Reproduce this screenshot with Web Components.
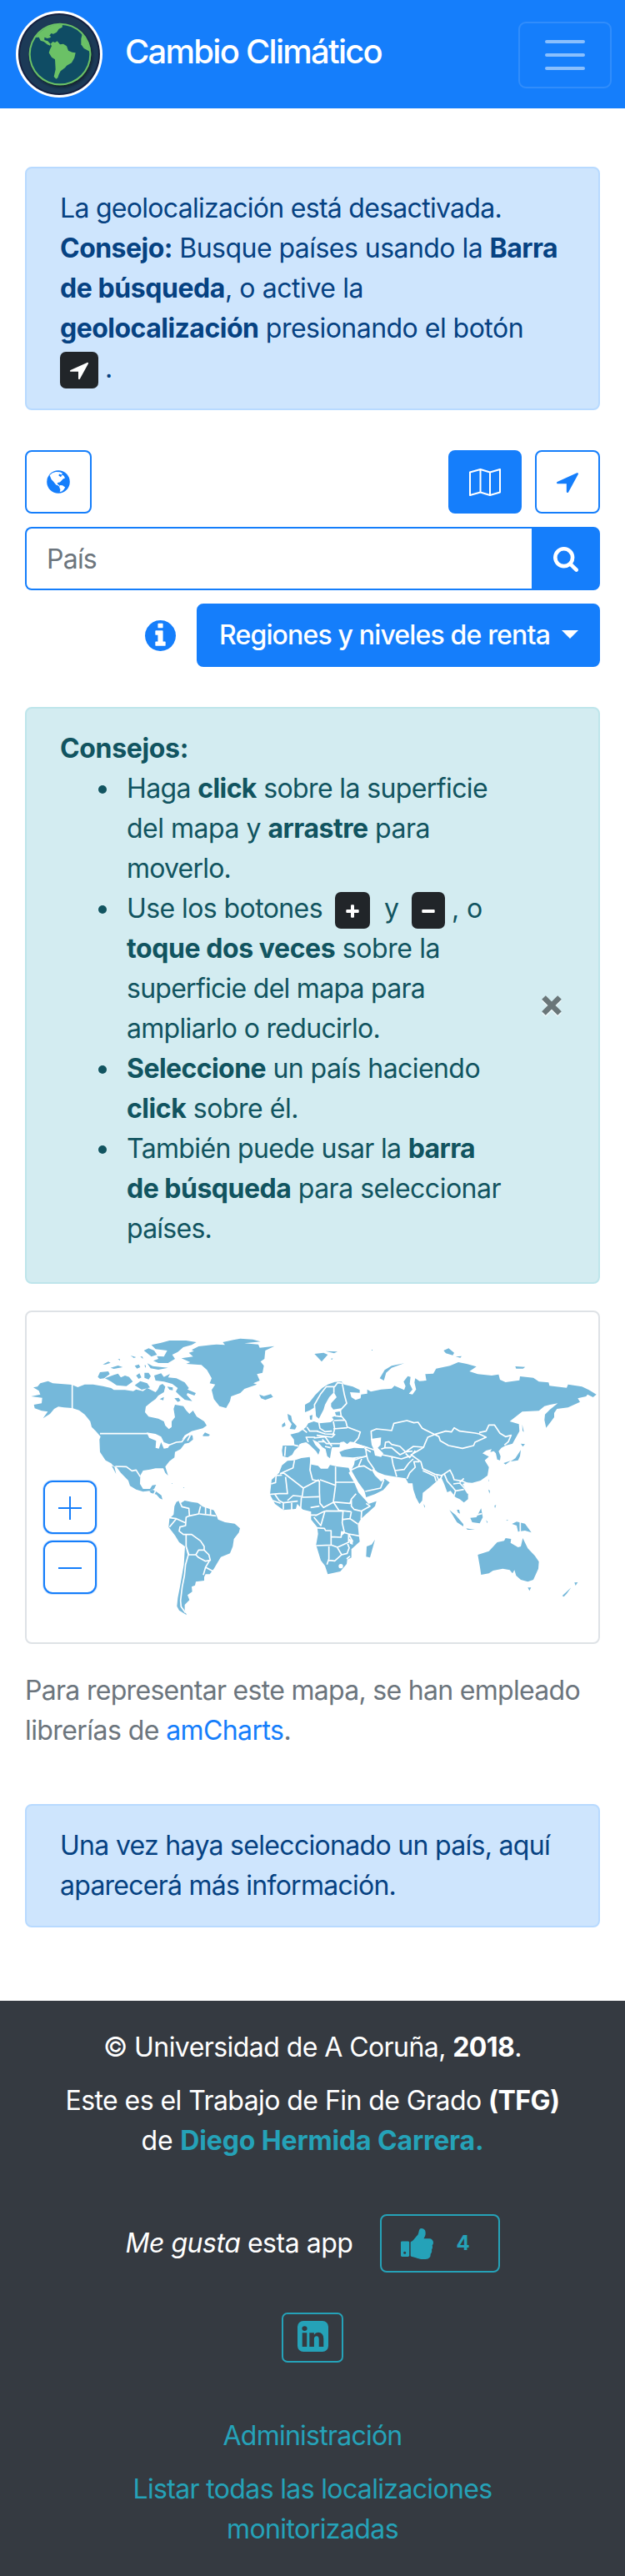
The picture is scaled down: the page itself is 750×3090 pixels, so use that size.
<!DOCTYPE html>
<html lang="es">
<head>
<meta charset="utf-8">
<title>Cambio Climático</title>
<style>
body{margin:0;background:#fff;color:#212529;font:32px/48px Inter,"Noto Sans","Liberation Sans",sans-serif}
b{font-weight:700}
a{color:#157efb;text-decoration:none}
</style>
</head>
<body>
<app-navbar><fit-line w="308">Cambio Climático</fit-line></app-navbar>
<page-main>
  <app-alert style="height:242px;margin-bottom:48px">
    <fit-line w="530">La geolocalización está desactivada.</fit-line>
    <fit-line w="597"><b>Consejo:</b> Busque países usando la <b>Barra</b></fit-line>
    <fit-line w="364"><b>de búsqueda</b>, o active la</fit-line>
    <fit-line w="556"><b>geolocalización</b> presionando el botón</fit-line>
    <text-row><key-badge icon="arrow" style="width:46px"></key-badge><span style="margin-left:8px">.</span></text-row>
  </app-alert>
  <map-toolbar></map-toolbar>
  <country-search></country-search>
  <region-picker><fit-line w="397">Regiones y niveles de renta</fit-line></region-picker>
  <app-alert kind="info" closable style="height:642px;margin-bottom:32px">
    <fit-line w="154"><b>Consejos:</b></fit-line>
    <tip-item>
      <fit-line w="433">Haga <b>click</b> sobre la superficie</fit-line>
      <fit-line w="364">del mapa y <b>arrastre</b> para</fit-line>
      <fit-line w="125">moverlo.</fit-line>
    </tip-item>
    <tip-item>
      <text-row>
        <fit-line w="235">Use los botones</fit-line>
        <key-badge icon="plus" style="width:42px;margin-left:15px"></key-badge>
        <span style="margin-left:17px;width:18px">y</span>
        <key-badge icon="minus" style="width:40px;margin-left:15px"></key-badge>
        <fit-line w="37" style="margin-left:8px">, o</fit-line>
      </text-row>
      <fit-line w="376"><b>toque dos veces</b> sobre la</fit-line>
      <fit-line w="358">superficie del mapa para</fit-line>
      <fit-line w="304">ampliarlo o reducirlo.</fit-line>
    </tip-item>
    <tip-item>
      <fit-line w="424"><b>Seleccione</b> un país haciendo</fit-line>
      <fit-line w="206"><b>click</b> sobre él.</fit-line>
    </tip-item>
    <tip-item>
      <fit-line w="418">También puede usar la <b>barra</b></fit-line>
      <fit-line w="449"><b>de búsqueda</b> para seleccionar</fit-line>
      <fit-line w="102">países.</fit-line>
    </tip-item>
  </app-alert>
  <world-map></world-map>
  <map-credit>
    <fit-line w="666">Para representar este mapa, se han empleado</fit-line>
    <fit-line w="319">librerías de <a>amCharts</a>.</fit-line>
  </map-credit>
  <app-alert style="height:98px">
    <fit-line w="588">Una vez haya seleccionado un país, aquí</fit-line>
    <fit-line w="403">aparecerá más información.</fit-line>
  </app-alert>
</page-main>
<app-footer>
  <fit-line w="502" style="margin-bottom:16px">© Universidad de A Coruña, <b>2018</b>.</fit-line>
  <fit-line w="593">Este es el Trabajo de Fin de Grado <b>(TFG)</b></fit-line>
  <fit-line w="411">de <a><b>Diego Hermida Carrera.</b></a></fit-line>
  <like-row>4</like-row>
  <icon-button></icon-button>
  <fit-line w="215" style="margin-bottom:16px"><a>Administración</a></fit-line>
  <fit-line w="431"><a>Listar todas las localizaciones</a></fit-line>
  <fit-line w="206"><a>monitorizadas</a></fit-line>
</app-footer>

<script>
const ICONS = {
  arrow: ['192 128 1408 1536', '<path d="M1593 349l-640 1280q-17 35-57 35-5 0-15-2-22-5-35.5-22.5t-13.5-39.5v-576h-576q-22 0-39.5-13.5t-22.5-35.5 4-42 29-30l1280-640q13-7 29-7 27 0 45 19 15 14 18.5 34.5t-6.5 39.5z"/>'],
  search: ['64 128 1664 1664', '<path d="M1216 832q0-185-131.5-316.5t-316.5-131.5-316.5 131.5-131.5 316.5 131.5 316.5 316.5 131.5 316.5-131.5 131.5-316.5zm512 832q0 52-38 90t-90 38q-54 0-90-38l-343-342q-179 124-399 124-143 0-273.5-55.5t-225-150-150-225-55.5-273.5 55.5-273.5 150-225 225-150 273.5-55.5 273.5 55.5 225 150 150 225 55.5 273.5q0 220-124 399l343 343q37 37 37 90z"/>'],
  info: ['128 128 1536 1536', '<path d="M1152 1376v-160q0-14-9-23t-23-9h-96v-512q0-14-9-23t-23-9h-320q-14 0-23 9t-9 23v160q0 14 9 23t23 9h96v320h-96q-14 0-23 9t-9 23v160q0 14 9 23t23 9h448q14 0 23-9t9-23zm-128-896v-160q0-14-9-23t-23-9h-192q-14 0-23 9t-9 23v160q0 14 9 23t23 9h192q14 0 23-9t9-23zm640 416q0 209-103 385.5t-279.5 279.5-385.5 103-385.5-103-279.5-279.5-103-385.5 103-385.5 279.5-279.5 385.5-103 385.5 103 279.5 279.5 103 385.5z"/>'],
  linkedin: ['128 128 1536 1536', '<path d="M365 1414h231v-694h-231v694zm246-908q-1-52-36-86t-93-34-94.5 34-36.5 86q0 51 35.5 85.5t92.5 34.5h1q59 0 95-34.5t36-85.5zm585 908h231v-398q0-154-73-233t-193-79q-136 0-209 117h2v-101h-231q3 66 0 694h231v-388q0-38 7-56 15-35 45-59.5t74-24.5q116 0 116 157v371zm468-998v960q0 119-84.5 203.5t-203.5 84.5h-960q-119 0-203.5-84.5t-84.5-203.5v-960q0-119 84.5-203.5t203.5-84.5h960q119 0 203.5 84.5t84.5 203.5z"/>'],
  thumb: ['64 128 1600 1536', '<path d="M320 1344q0-26-19-45t-45-19q-27 0-45.5 19t-18.5 45q0 27 18.5 45.5t45.5 18.5q26 0 45-18.5t19-45.5zm160-512v640q0 26-19 45t-45 19h-288q-26 0-45-19t-19-45v-640q0-26 19-45t45-19h288q26 0 45 19t19 45zm1184 0q0 86-55 149 15 44 15 76 3 76-43 137 17 56 0 117-15 57-54 94 9 112-49 181-64 76-197 78h-129q-66 0-144-15.5t-121.5-29-120.5-39.5q-123-43-158-44-26-1-45-19.5t-19-44.5v-641q0-25 18-43.5t43-20.5q24-2 76-59t101-121q68-87 101-120 18-18 31-48t17.5-48.5 13.5-60.5q7-39 12.5-61t19.5-52 34-50q19-19 45-19 46 0 82.5 10.5t60 26 40 40.5 24 45 12 50 5 45 .5 39q0 38-9.5 76t-19 60-27.5 56q-3 6-10 18t-11 22-8 24h277q78 0 135 57t57 135z"/>'],
  globe: ['0 0 28 28', '<circle cx="14" cy="14" r="13.8"/><path fill="#fff" d="M3.6 6L7 3.2 11 2l5 .3 3 1.5-1.2 1.7L15 4.6l-.6 2 2.6 1.6 1.6-2.6 2.2 1.4L22 9.6l-2.4.8-1.800 2-2 2.200-1.600.200-1.600.600 1 1.800 1.600.800.400 2.200-1.800-1.600-2.600-1L8 13.600 5.600 11zM16 18l3 .3 3.200 2.200-1.600 2.800-2.400 2.200-2.400.600.600-3-1.200-2.400z"/>'],
  map: ['0 0 38 33', '<path fill="none" stroke="currentColor" stroke-width="2" stroke-linejoin="round" d="M1 4.5L13.5 1 25 4.5 37 1v27.5L25 32l-11.500-3.500L1 32zM13.500 1v27.500M25 4.500V32"/>'],
  plus: ['0 0 16 16', '<path d="M6 1.500q0-1.200 1-1.200h2q1 0 1 1.200V6h4.500q1.200 0 1.200 1v2q0 1-1.200 1H10v4.500q0 1.200-1 1.200H7q-1 0-1-1.200V10H1.500Q.3 10 .3 9V7q0-1 1.200-1H6z"/>'],
  minus: ['0 0 16 16', '<rect x=".3" y="6" width="15.400" height="4" rx="1"/>']
};
const icon = (name, w, h, extra = '') =>
  `<svg style="display:block;flex:none;width:${w}px;height:${h}px;${extra}" viewBox="${ICONS[name][0]}" preserveAspectRatio="none" fill="currentColor">${ICONS[name][1]}</svg>`;

const define = (tag, html) => customElements.define(tag, class extends HTMLElement {
  constructor() {
    super();
    this.attachShadow({mode: 'open'}).innerHTML = typeof html === 'function' ? html(this) : html;
  }
});

define('text-row', '<style>:host{display:flex;align-items:center;height:48px;white-space:nowrap}</style><slot></slot>');

define('key-badge', el => `<style>
:host{display:flex;align-items:center;justify-content:center;height:44px;border-radius:7px;background:#212529;color:#fff;flex:none;margin-top:3px}
</style>${el.getAttribute('icon') === 'arrow' ? icon('arrow', 22, 22) : icon(el.getAttribute('icon'), 16, 16, 'margin-top:2px')}`);

define('tip-item', `<style>
:host{display:block;margin-left:80px;position:relative}
i{position:absolute;left:-34px;top:20px;width:10px;height:10px;border-radius:50%;background:currentColor}
</style><i></i><slot></slot>`);

define('app-navbar', `<style>
:host{display:flex;align-items:center;height:130px;background:#157efb;color:#fff;font-weight:500;box-sizing:border-box;padding:0 16px 0 18px}
svg{width:106px;height:106px;flex:none}
.name{margin:-6px 0 0 26px;flex:1;font-size:40px}
.toggle{display:flex;flex-direction:column;align-items:center;justify-content:center;gap:12px;width:108px;height:76px;border:2px solid rgba(255,255,255,.12);border-radius:9px;margin-top:2px}
.toggle i{width:48px;height:4px;border-radius:2px;background:rgba(255,255,255,.5)}
</style>
<svg viewBox="54 36 318 318">
 <defs><filter id="s" x="-20%" y="-20%" width="140%" height="140%"><feDropShadow dx="4" dy="7" stdDeviation="4" flood-color="#0a1420" flood-opacity=".8"/></filter>
 <clipPath id="c"><circle cx="216" cy="195" r="107"/></clipPath></defs>
 <circle cx="213" cy="195" r="156" fill="#fff"/><circle cx="213" cy="195" r="147" fill="#15203f"/><circle cx="213" cy="195" r="141" fill="#1c3a57"/>
 <circle cx="216" cy="195" r="112" fill="#6bc166" filter="url(#s)"/><circle cx="216" cy="195" r="106" fill="#0f4c64"/>
 <g fill="#6bc166" clip-path="url(#c)">
 <path d="M120 135L135 105 180 80 225 85 224 98 212 104 204 116 192 122 184 120 178 128 184 132 180 136 170 138 160 134 160 144 172 148 182 158 180 164 170 160 158 150 146 146 140 134z"/>
 <path d="M182 158L190 150 198 153 206 148 216 160 228 158 240 166 246 182 260 188 272 190 268 208 258 226 240 236 234 244 218 256 212 268 208 280 202 284 194 276 200 250 198 214 186 206 176 190 180 178 186 166z"/>
 <path d="M296 122L292 140 292 160 302 174 324 186 340 160 320 120z"/></g>
</svg>
<div class="name"><slot></slot></div>
<div class="toggle"><i></i><i></i><i></i></div>`);
 
define('page-main', '<style>:host{display:block;box-sizing:border-box;height:2270px;padding:70px 30px 0}</style><slot></slot>');

define('app-alert', el => `<style>
:host{display:flex;align-items:center;border:2px solid #b8daff;border-radius:8px;background:#cee5fd;color:#064282;padding:24px 40px 22px}
:host([kind=info]){background:#d3ecf1;border-color:#bee5eb;color:#115460}
.body{flex:1;align-self:flex-start}
.close{width:26px;height:26px;margin-right:3px;margin-top:22px;filter:drop-shadow(0 2px 0 #fff9)}
</style><div class="body"><slot></slot></div>${el.hasAttribute('closable') ? '<svg class="close" viewBox="0 0 26 26"><path d="M3.500 3.500l19 19m0-19l-19 19" stroke="#6a7679" stroke-width="6.500"/></svg>' : ''}`);

const BTN = '.b{display:flex;align-items:center;justify-content:center;height:76px;box-sizing:border-box;border:2px solid #157efb;border-radius:8px;color:#157efb;background:#fff}.on{background:#157efb;color:#fff}';
define('map-toolbar', `<style>:host{display:flex;gap:16px;margin-bottom:16px}${BTN}</style>
<div class="b" style="width:80px;margin-right:auto">${icon('globe', 28, 28)}</div>
<div class="b on" style="width:88px">${icon('map', 38, 33)}</div>
<div class="b" style="width:78px">${icon('arrow', 26, 26)}</div>`);

define('country-search', `<style>:host{display:flex;margin-bottom:16px}${BTN}
.field{flex:1;justify-content:flex-start;border-radius:8px 0 0 8px;border-right:0;padding-left:24px;color:#6c757d}</style>
<div class="b field"><fit-line w="60" style="margin-top:1px">País</fit-line></div><div class="b on" style="width:82px;border-radius:0 8px 8px 0">${icon('search', 30, 30, 'margin-top:2px')}</div>`);

define('region-picker', `<style>:host{display:flex;justify-content:flex-end;align-items:center;gap:25px;margin-bottom:48px;color:#157efb}${BTN}
.b{width:484px;font-weight:500;padding-left:1px}
.caret{border:10px solid transparent;border-top-color:#fff;border-bottom:0;margin-left:14px;margin-top:-2px}</style>
${icon('info', 37, 37)}
<div class="b on"><slot></slot><i class="caret"></i></div>`);

define('world-map', `<style>
:host{display:block;position:relative;box-sizing:border-box;height:400px;border:2px solid #dee2e6;border-radius:8px}
svg.world{display:block;width:100%;height:100%}
.zoom{position:absolute;left:20px;top:202px;display:flex;flex-direction:column;gap:8px}
.zoom svg{display:block;width:60px;height:60px;border:2px solid #157efb;border-radius:11px;background:#fff;box-shadow:0 0 0 1px #cfe3fb}
.land{fill:#75b8da}.line{fill:none;stroke:#fff;stroke-width:5;stroke-linejoin:round}.sea{fill:#fff}
</style>
<svg class="world" viewBox="32 1574 686 396" preserveAspectRatio="none">
<g transform="translate(30 1570) scale(.33333)">
<path class="land" d="M30 283L45 280 55 268 83 260 100 268 168 273 190 282 215 272 245 272 280 278 310 285 320 292 360 292 390 296 400 290 425 296 440 285 470 300 478 290 485 275 495 270 505 280 500 300 480 312 470 325 455 335 435 352 432 372 445 388 480 395 500 405 505 420 518 433 528 425 528 405 540 390 535 360 540 345 570 350 580 365 592 378 605 366 618 388 645 405 654 420 640 430 600 440 575 455 565 470 590 455 603 455 605 470 590 482 575 485 560 505 540 515 538 535 520 548 505 568 515 600 505 590 498 574 470 574 450 578 425 582 415 600 414 630 425 648 450 648 458 635 472 633 465 648 450 655 425 658 400 650 378 637 372 618 345 590 330 570 318 565 310 556 290 545 270 515 268 470 272 460 255 440 240 425 235 405 215 380 195 365 170 357 140 355 120 352 105 360 90 378 65 394 82 370 60 367 35 358 32 345 60 340 62 320 22 315 55 308 50 295z
M312 565L322 569 328 594zM448 656L460 651 475 659 491 671 495 686 485 682 473 668 453 662z
M262 245L270 228 300 225 305 235 285 250 270 252zM288 250L320 238 335 233 345 247 360 240 375 245 388 262 365 278 330 275 310 262zM280 200L300 190 308 194 290 200zM308 212L335 204 352 210 320 216zM334 181l8 0 0 5zM380 168l20 6-8 3zM395 205l15-5 5 10-12 5zM400 240l12-8 7 15-10 5zM430 230l15 0 8 12-8 12-15-6zM395 275l20-15 25 8 10 15-30 8zM415 172l8 0 2 8zM430 203l5 0 0 10zM640 455l8-10 18 8-5 5-20 0zM528 627l3 0 0 4zM569 642l5 1-2 2z
M455 130L490 122 520 114 580 114 617 120 600 130 570 138 550 155 530 165 540 180 515 195 480 195 462 187 480 180 475 170 500 172 512 150 470 145zM428 150L445 142 465 150 475 165 455 172zM440 196L460 206 515 212 480 219 452 214z
M465 240L490 232 500 245 522 234 515 247 545 250 575 265 590 285 585 290 615 303 610 312 585 303 582 310 602 332 575 327 555 310 543 298 550 285 530 270 500 262 470 258zM538 322l15-2 7 10-10 5zM485 325l15-8-2 12zM512 280l20 3 0 10-12-2z
M563 178L605 172 590 158 608 152 600 148 625 135 690 128 720 130 712 120 750 112 775 107 820 110 848 118 790 124 840 128 845 140 898 134 865 150 862 180 848 190 860 205 855 230 835 235 845 258 822 268 835 272 790 288 775 303 742 315 738 332 724 357 700 350 680 325 672 292 685 272 665 268 672 250 655 220 635 202 580 198 595 192z
M843 308L860 314 885 307 893 317 865 328 850 322z
M545 695L555 690 560 700 575 690 600 695 622 698 640 712 680 725 690 745 695 758 720 768 755 773 774 790 770 805 752 828 748 855 738 880 705 893 695 910 680 935 665 955 650 955 645 965 645 978 615 982 612 995 600 1000 602 1018 585 1030 592 1048 575 1065 575 1085 582 1102 555 1085 547 1070 550 1040 558 1000 565 960 572 920 576 855 555 840 540 815 517 785 520 755 535 740 538 710z"/>
<path class="sea" d="M438 445L470 450 490 460 500 480 522 488 515 500 500 503 490 480 482 503 470 500 472 475 447 464z"/>
<path class="line" d="M170 270V360M270 449H442M505 500L520 490 545 480 565 478 585 452M325 567L365 568 385 583 400 580 415 604M580 855L588 885 578 920 574 960 566 1000 560 1050 562 1072 578 1094M555 690L565 712 590 718 592 745 625 738 632 710M592 745L580 750 578 780 558 785 555 800 570 812 600 812 632 835 645 855 645 868 625 868 615 885 590 885 580 855 580 812M615 885L625 895 650 908 667 905 662 885 645 868M665 905L650 930 642 958M650 930L678 945M522 752L545 755 578 770M545 755L520 785M650 714V742M668 720V742M628 738L688 745M470 655L460 675M595 455L585 475"/>
</g>
<g transform="translate(370 1570) scale(.33333)">
<path class="land" d="M120 262L128 272 160 280 185 292 185 302 150 300 155 318 170 328 188 322 190 308 212 305 212 290 225 298 262 290 300 287 310 277 345 292 350 278 343 262 358 242 368 245 365 270 375 290 362 305 375 308 388 290 382 265 385 250 400 260 425 258 421 235 450 233 460 215 510 205 540 192 570 198 605 208 580 225 610 235 660 240 685 236 690 255 710 264 760 257 762 243 810 248 830 262 865 265 868 277 930 284 935 272 985 280 1010 292 1037 308 1025 318 1005 308 1000 315 970 322 978 335 935 355 895 360 885 375 885 390 870 410 856 428 850 400 852 380 870 362 898 340 870 345 850 350 830 367 770 370 725 405 758 415 760 440 735 485 710 492 695 500 685 512 692 530 690 545 680 542 675 520 668 512 655 515 660 505 640 510 627 520 650 532 635 545 650 570 645 600 620 618 590 626 570 625 555 630 575 665 575 685 560 697 545 685 530 678 512 655 500 660 490 632 478 605 462 620 440 640 412 662 410 690 400 702 388 680 378 650 375 628 360 628 350 610 305 603 275 598 250 588 235 575 228 580 240 600 262 622 275 612 293 625 270 652 240 667 208 678 202 655 180 625 160 590 155 580 165 560 168 540 200 530 160 535 120 532 112 515 130 508 165 500 200 502 205 495 180 487 165 480 150 478 140 487 128 478 115 480 112 498 85 498 82 512 78 538 68 530 62 505 50 497 35 480 15 470 25 490 42 508 36 525 28 512 5 490 -8 480 -25 484 -33 488 -36 497 -50 510 -58 525 -75 535 -92 530 -95 510 -92 492 -50 492 -52 470 -65 452 -35 445 -20 435 -8 425 0 412 20 405 40 412 80 408 92 400 85 390 100 385 96 372 118 368 118 358 90 362 82 352 82 340 102 318 92 300 75 318 60 345 55 362 45 382 38 395 28 387 22 355 5 365 -12 372 -12 345 5 335 25 310 50 285 70 272 95 263z
M22 162L55 158 70 165 48 190zM62 152l43 2-12 6zM80 180l8-2-2 5zM257 250L275 220 300 205 345 196 300 212 280 230 272 258zM487 150L505 142 525 158 520 167 495 160zM530 172l22-2-5 6zM745 207l36 2-8 6-25 0zM770 416l6 27-5-4zM228 147h3v3h-3zM765 485l15 2-8 9zM765 508L762 530 755 545 728 549 745 538zM703 555l25-8-18 13zM648 612l2 8-2 1zM648 650l6 5-2 10zM670 708l6-2-4 12zM415 702l5 8-2 6zM508 724L530 742 558 775 558 783 535 768zM535 723l8 0 3 14-8-4zM568 790l32 5-27 0zM583 752L605 750 622 718 628 750 617 772 590 768zM640 760l6 8-3 2zM712 760l8 0-4 3zM733 774L750 766 780 773 803 805 780 798 755 802 750 780z
M610 885L650 872 680 840 705 835 710 825 730 828 728 842 755 858 765 855 772 825 790 862 815 888 830 910 828 935 810 975 790 982 765 975 748 960 742 940 735 952 725 940 700 935 665 942 650 952 622 957 618 930zM790 1003l12 0-6 12zM958 985l12-1-8 12zM946 1003L930 1025 920 1036 914 1033zM240 830L222 895 208 892 210 855 228 848z"/>
<path class="sea" d="M225 468L262 463 260 490 250 500 270 520 262 533 240 528 235 505 228 490z"/>
<path class="line" d="M228 468L226 440 245 432 275 435 300 438 308 412 355 402 380 410 395 408 410 430 455 452 430 462 420 485 415 498 378 495 350 515 330 495 300 488 290 478 278 480 275 500 262 505M455 452L495 440 515 443 525 428 545 440 600 447 615 450 640 462 600 480 595 492 555 502 505 492 475 475 470 460zM615 445L640 440 650 418 670 418 690 448 710 460 730 455 720 478 706 490M415 498L405 505 370 525 405 550 412 575 455 595 480 600 510 580 520 600 525 615 555 620 572 628M412 582L455 602 460 620M355 612L365 590 385 570 380 550 400 550M350 515L375 512M350 520L365 535 385 510M210 528L215 545 238 578M265 525L300 532 305 560 312 582 318 604M300 532L335 540 365 530M312 582L345 578 362 555 378 540M275 500L300 500 330 525 350 515M206 500L210 530 190 535 165 545M180 568L200 565 228 582M150 582L180 568 192 540M205 657L260 645 272 615M490 595L500 620 518 640 530 655 525 672M522 630L545 627 562 645 575 665M530 655L560 650M545 625L560 610M462 600L472 622 482 598M25 387L22 345 45 305 65 280 95 280 105 266 125 268M92 302L92 280M122 268L130 310 138 340 115 365 118 385 135 405 140 425 187 443 180 465 165 482M90 432L140 428M92 402L130 400M96 385L120 388M90 405L95 432 88 455M38 410L42 430 60 442 85 440M-5 425L5 440 35 440M0 480L-8 462 25 462M-5 445L-20 433M30 440L60 450 95 452 85 462 30 455M20 465L60 460 85 495M50 470L65 485 115 485M35 478L60 478M60 495L80 500M-52 490L-36 494M-82 495L-85 530M180 490L215 500 238 508M202 502L225 515M590 745L625 737M763 765V808"/>
</g>
<g transform="translate(310 1640) scale(.33333)">
<path class="land" d="M105 168L118 175 122 195 138 212 132 224 113 222 120 205 108 188zM85 207L95 198 98 210 86 217zM185 175L195 172 193 190 186 188z
M105 337L130 335 155 327 185 323 190 350 215 355 225 365 250 365 258 352 285 358 325 362 330 375 325 380 345 415 360 450 385 478 397 492 425 482 420 500 370 545 358 565 362 605 365 628 335 655 335 685 320 692 318 708 295 735 250 745 240 715 225 695 208 640 215 600 212 575 190 548 190 520 160 512 140 492 135 510 90 514 60 492 42 458 48 405 75 380 85 353z"/>
<path class="line" d="M78 383L125 362 130 335M88 378L162 435 218 405M190 325L186 370 195 405 220 410 220 450 222 490 235 505 272 485 330 490 335 475 352 455M85 388L64 390 62 415 46 420M98 395L105 455 75 455 40 458M278 358V425L222 405M278 414H348M278 425L270 485 290 515 335 520M162 435L158 465 125 462 105 480M158 468L218 466M152 515L155 468M120 488V514M90 488V512M60 458L75 480 90 488 142 482M52 480L80 490M335 478L335 500 345 512 370 518 402 500 388 490M188 505L220 500M205 535L235 520 245 517 305 518 302 560 310 595 298 605M240 517L225 570 200 540M185 532L212 532M335 520L330 545 358 564M305 548L330 545M372 518L370 547M205 578L238 580 242 588 262 588 262 640 208 642M262 610L298 612 300 592 325 600 367 608M262 640L285 648 325 630 325 600 340 628M254 645V690L247 710M285 650L300 675 320 670 327 650 320 632M254 695L275 697 300 675M330 680L318 690"/>
<circle class="sea" cx="297" cy="716" r="8"/>
<path class="sea" d="M325 617l15 5 0 17-10-4z"/>
</g></svg>
<div class="zoom">
<svg viewBox="0 0 60 60"><path d="M16 31h28M30 17v28" stroke="#157efb" stroke-width="2"/></svg>
<svg viewBox="0 0 60 60"><path d="M16 31h28" stroke="#157efb" stroke-width="2"/></svg>
</div>`);

define('map-credit', '<style>:host{display:block;margin:32px 0 64px;color:#6c757d}</style><slot></slot>');

define('app-footer', `<style>
:host{--teal:#25a2b8;display:flex;flex-direction:column;align-items:center;box-sizing:border-box;height:690px;padding-top:32px;background:#353a41;color:#fff}
</style><slot></slot>`);

define('like-row', `<style>
:host{display:flex;align-items:center;margin:63px 0 47px;height:72px}
.like{display:flex;align-items:center;box-sizing:border-box;width:144px;height:70px;margin-left:32px;padding-left:23px;border:2px solid var(--teal);border-radius:8px;color:var(--teal);font-size:24px;font-weight:700}
.like span{margin-left:28px}
</style><fit-line w="273"><em>Me gusta</em> esta app</fit-line><div class="like">${icon('thumb', 39, 37)}<span><slot></slot></span></div>`);

define('icon-button', `<style>
:host{display:flex;justify-content:center;box-sizing:border-box;width:74px;height:60px;padding-top:8px;margin-bottom:64px;border:2px solid var(--teal);border-radius:7px;color:var(--teal)}
</style>${icon('linkedin', 37, 37)}`);

/* A single line of text whose tracking is adjusted to a given measure.
   Registered last, so that its font size is already the one its parent gives. */
customElements.define('fit-line', class extends HTMLElement {
  constructor() {
    super();
    this.attachShadow({mode: 'open'}).innerHTML =
      '<style>:host{display:block;height:48px;line-height:48px;white-space:nowrap}span{display:inline-block}</style><span><slot></slot></span>';
  }
  connectedCallback() {
    const span = this.shadowRoot.querySelector('span');
    const gap = +this.getAttribute('w') - span.getBoundingClientRect().width;
    span.style.letterSpacing = gap / this.textContent.trim().length + 'px';
  }
});

document.querySelectorAll('app-footer a').forEach(a => a.style.color = '#25a2b8');
</script>
</body>
</html>
